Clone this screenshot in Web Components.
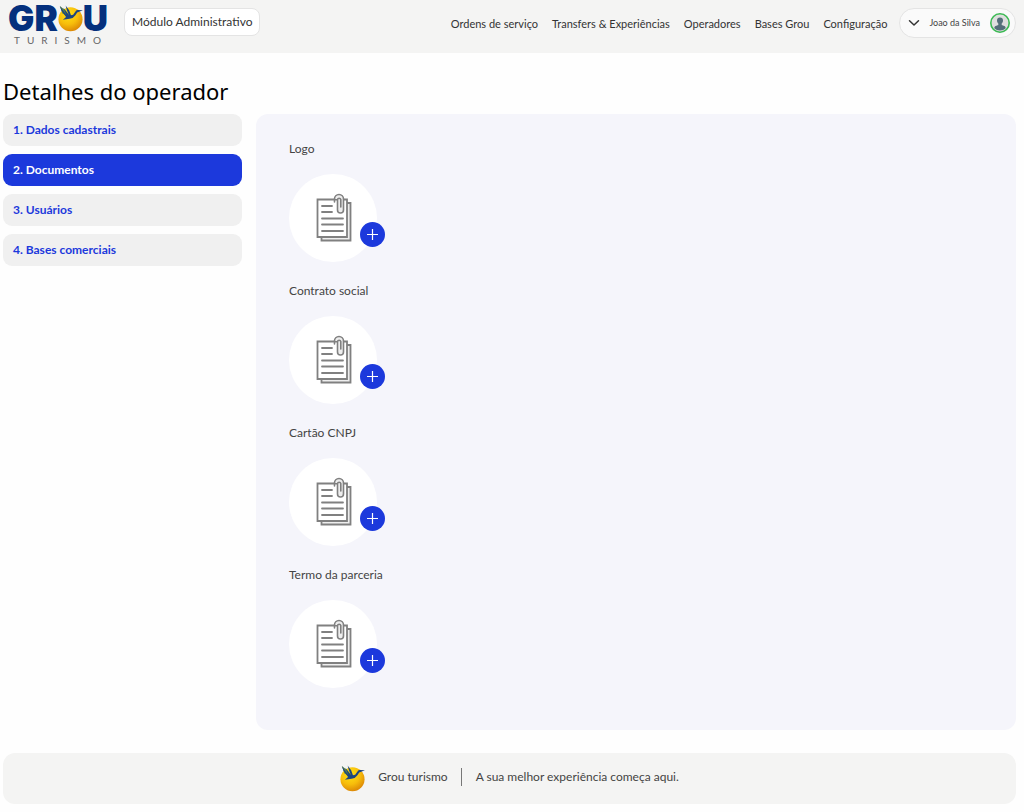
<!DOCTYPE html>
<html lang="pt-BR">
<head>
<meta charset="utf-8">
<meta name="viewport" content="width=device-width, initial-scale=1">
<title>Grou Turismo</title>
<style>
  body {
    margin: 0;
    background: #fefefe;
    color: #444;
    font-family: Lato, "Open Sans", sans-serif;
    font-size: 12px;
    line-height: 16px;
    --blue: #1c39dc;
    --bar: #f4f4f3;
    --panel: #f5f5fb;
    --item: #f0f0f0;
    --border: #e4e4e4;
  }
</style>
</head>
<body>
<grou-app></grou-app>

<script>
/**
 * The sun with the crane flying over it, used by the logo and by the footer
 */
customElements.define(
  'grou-sun',
  class extends HTMLElement {
    constructor() {
      super();
      this.attachShadow({ mode: 'open' }).innerHTML = `
      <style>
        :host {
          display: block;
          flex: none;
          width: 25px;
        }

        svg {
          display: block;
          width: 100%;
          overflow: visible;
        }
      </style>
      <svg viewBox="0 0 28 30" aria-hidden="true">
        <defs>
          <radialGradient id="sun" cx="0.4" cy="0.3" r="0.75">
            <stop offset="0" stop-color="#ffe415"/>
            <stop offset="0.55" stop-color="#f7bd0b"/>
            <stop offset="1" stop-color="#d98206"/>
          </radialGradient>
        </defs>
        <circle cx="14" cy="16" r="13.5" fill="url(#sun)"/>
        <path fill="#5c8446" d="M2 1 8 5.500 13.500 12 11 13 5 9.500Z"/>
        <path fill="#1c4580" d="M28 6 22.500 5.700q-1.800-.2-2.700 1.300L17 11 14.500 11.500 12.500 6 8.500.5 10 6 12.500 12 6 3 9.500 11.500 2 1 4 6.500 9 13.500 5.500 16.500 13 15.500Q17.500 14.800 19.500 11.500L21.500 8.300Z"/>
      </svg>
    `;
    }
  }
);

customElements.define(
  'grou-logo',
  class extends HTMLElement {
    constructor() {
      super();
      this.attachShadow({ mode: 'open' }).innerHTML = `
      <style>
        :host {
          display: block;
        }

        a {
          display: block;
          color: #04307d;
          text-decoration: none;
        }

        .name {
          display: flex;
          align-items: center;
          height: 32px;
          font-family: Inter, sans-serif;
          font-size: 35px;
          font-weight: 900;
          line-height: 36px;
        }

        .sub {
          padding-left: 6px;
          color: #666;
          font-size: 10px;
          line-height: 12px;
          letter-spacing: 7px;
        }
      </style>
      <a href="#" aria-label="Grou Turismo">
        <div class="name"><span>GR</span><grou-sun></grou-sun><span>U</span></div>
        <div class="sub">TURISMO</div>
      </a>
    `;
    }
  }
);

customElements.define(
  'user-menu',
  class extends HTMLElement {
    constructor() {
      super();
      this.attachShadow({ mode: 'open' }).innerHTML = `
      <style>
        :host {
          display: block;
        }

        button {
          display: flex;
          align-items: center;
          gap: 9px;
          height: 30px;
          box-sizing: border-box;
          padding: 0 5px 0 8px;
          border: 1px solid var(--border);
          border-radius: 15px;
          background: #fafafa;
          color: #444;
          font: inherit;
          font-size: 9px;
        }

        .avatar {
          margin-left: 1px;
        }
      </style>
      <button type="button" aria-haspopup="true">
        <svg width="12" height="12" viewBox="0 0 12 12" fill="none" stroke="#333" stroke-width="1.500" stroke-linecap="round" stroke-linejoin="round" aria-hidden="true"><path d="m1.500 3.800 4.500 4.200 4.500-4.200"/></svg>
        <slot></slot>
        <svg class="avatar" width="20" height="20" viewBox="0 0 20 20" aria-hidden="true">
          <circle cx="10" cy="10" r="9.200" fill="#dedede" stroke="#3cba54" stroke-width="1.600"/>
          <path fill="#546e7a" d="M10 4.500c2 0 3 1.300 3 3.100 0 1.400-.6 2.400-1.300 3v1.300l2.600 1c1 .4 1.400 1.200 1.400 2.300A8 8 0 0 1 10 17.500a8 8 0 0 1-5.700-2.300c0-1.100.4-1.900 1.400-2.300l2.600-1v-1.300c-.7-.6-1.300-1.600-1.300-3 0-1.800 1-3.100 3-3.100z"/>
        </svg>
      </button>
    `;
    }
  }
);

customElements.define(
  'app-header',
  class extends HTMLElement {
    constructor() {
      super();
      this.attachShadow({ mode: 'open' }).innerHTML = `
      <style>
        :host {
          display: block;
        }

        header {
          display: flex;
          align-items: flex-start;
          gap: 12px;
          height: 53px;
          box-sizing: border-box;
          padding: 0 8px;
          background: var(--bar);
        }

        grou-logo {
          margin: 2px 4px 0 0;
        }

        .module {
          height: 28px;
          margin-top: 8px;
          padding: 0 7px;
          border: 1px solid var(--border);
          border-radius: 8px;
          background: #fff;
          color: #333;
          font: inherit;
        }

        nav {
          display: flex;
          gap: 14px;
          margin: 16px 0 0 auto;
          font-size: 11px;
        }

        ::slotted(a) {
          color: #333;
          text-decoration: none;
        }

        user-menu {
          margin-top: 8px;
        }
      </style>
      <header>
        <grou-logo></grou-logo>
        <button class="module" type="button">Módulo Administrativo</button>
        <nav><slot></slot></nav>
        <user-menu>Joao da Silva</user-menu>
      </header>
    `;
    }
  }
);

/**
 * Example
 *
 * ```html
 * <step-item active>2. Documentos</step-item>
 * ```
 */
customElements.define(
  'step-item',
  class extends HTMLElement {
    constructor() {
      super();
      this.attachShadow({ mode: 'open' }).innerHTML = `
      <style>
        :host {
          display: block;
        }

        a {
          display: block;
          padding: 8px 10px;
          border-radius: 9px;
          background: var(--item);
          color: var(--blue);
          font-weight: bold;
          text-decoration: none;
        }

        :host([active]) a {
          background: var(--blue);
          color: #fff;
        }
      </style>
      <a href="#"><slot></slot></a>
    `;
    }
  }
);

/**
 * One document to send: caption, picture of the file and the add button
 */
customElements.define(
  'document-upload',
  class extends HTMLElement {
    constructor() {
      super();
      this.attachShadow({ mode: 'open' }).innerHTML = this.getTemplate();
    }

    connectedCallback() {
      this.shadowRoot.querySelector('label').textContent = this.getAttribute('caption');
    }

    getTemplate() {
      return `
      <style>
        :host {
          display: block;
        }

        label {
          display: block;
          margin-bottom: 17px;
        }

        .picture {
          position: relative;
          display: grid;
          place-items: center;
          width: 88px;
          height: 88px;
          border-radius: 50%;
          background: #fff;
        }

        /* the button lies over the edge of the circle */
        button {
          position: absolute;
          right: -8px;
          bottom: 15px;
          display: grid;
          place-items: center;
          width: 25px;
          height: 25px;
          padding: 0;
          border: 0;
          border-radius: 50%;
          background: var(--blue);
        }
      </style>
      <label for="add"></label>
      <div class="picture">
        <svg width="42" height="50" viewBox="-4 1 42 50" fill="none" stroke="#808080" stroke-width="1.800" aria-hidden="true">
          <path fill="#eee" d="M31 11h3.500v37.500h-29V45"/>
          <path fill="#fff" d="M1.500 7.500h29.500v37.500h-29.500z"/>
          <path stroke-linecap="round" d="M6 14h10M6 20h10M6 26.500h21M6 32.500h21M6 39h21"/>
          <path fill="#eee" stroke="none" d="M18.500 7a4.500 4.500 0 0 1 9 0v10a3 3 0 0 1-6 0V7z"/>
          <path stroke-width="1.600" stroke-linecap="round" d="M18.500 10V7a4.500 4.500 0 0 1 9 0v11a3 3 0 0 1-6 0V7.500a1.700 1.700 0 0 1 3.300 0v7.500"/>
        </svg>
        <button id="add" type="button">
          <svg width="13" height="13" viewBox="0 0 13 13" stroke="#fff" stroke-width="1.200" aria-hidden="true"><path d="M6.500 1v11M1 6.500h11"/></svg>
        </button>
      </div>
    `;
    }
  }
);

customElements.define(
  'app-footer',
  class extends HTMLElement {
    constructor() {
      super();
      this.attachShadow({ mode: 'open' }).innerHTML = `
      <style>
        :host {
          display: block;
        }

        footer {
          display: flex;
          align-items: center;
          justify-content: center;
          gap: 13px;
          height: 51px;
          border-radius: 12px;
          background: var(--bar);
          line-height: 18px;
        }

        span {
          margin-bottom: 3px;
        }

        .tagline {
          padding-left: 14px;
          border-left: 1px solid #777;
        }
      </style>
      <footer>
        <grou-sun></grou-sun>
        <span>Grou turismo</span>
        <span class="tagline">A sua melhor experiência começa aqui.</span>
      </footer>
    `;
    }
  }
);

customElements.define(
  'grou-app',
  class extends HTMLElement {
    constructor() {
      super();
      this.attachShadow({ mode: 'open' }).innerHTML = `
      <style>
        :host {
          display: block;
        }

        main,
        app-footer {
          margin: 0 8px 0 3px;
        }

        h1 {
          margin: 0;
          padding: 24px 0 9px;
          color: #000;
          font-family: "Noto Sans", sans-serif;
          font-size: 22px;
          font-weight: normal;
          line-height: 28px;
        }

        .columns {
          display: grid;
          grid-template-columns: 239px 1fr;
          gap: 14px;
          margin-bottom: 23px;
        }

        .steps {
          display: flex;
          flex-direction: column;
          gap: 8px;
        }

        .documents {
          display: flex;
          flex-direction: column;
          gap: 21px;
          padding: 27px 33px 42px;
          border-radius: 12px;
          background: var(--panel);
        }

        app-footer {
          padding-bottom: 8px;
        }
      </style>
      <app-header>
        <a href="#">Ordens de serviço</a>
        <a href="#">Transfers &amp; Experiências</a>
        <a href="#">Operadores</a>
        <a href="#">Bases Grou</a>
        <a href="#">Configuração</a>
      </app-header>
      <main>
        <h1>Detalhes do operador</h1>
        <div class="columns">
          <nav class="steps">
            <step-item>1. Dados cadastrais</step-item>
            <step-item active>2. Documentos</step-item>
            <step-item>3. Usuários</step-item>
            <step-item>4. Bases comerciais</step-item>
          </nav>
          <section class="documents">
            <document-upload caption="Logo"></document-upload>
            <document-upload caption="Contrato social"></document-upload>
            <document-upload caption="Cartão CNPJ"></document-upload>
            <document-upload caption="Termo da parceria"></document-upload>
          </section>
        </div>
      </main>
      <app-footer></app-footer>
    `;
    }
  }
);
</script>
</body>
</html>
